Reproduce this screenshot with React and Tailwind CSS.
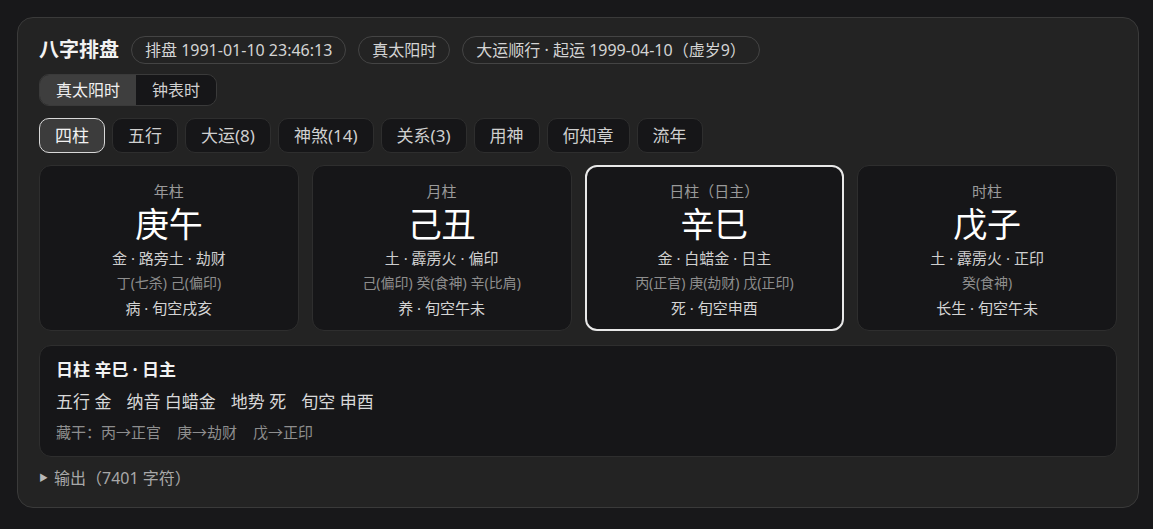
import React from "react";

const font = { fontFamily: "'Noto Sans', 'Noto Sans CJK SC', sans-serif" };

const tabs = ["四柱", "五行", "大运(8)", "神煞(14)", "关系(3)", "用神", "何知章", "流年"];

const pillars = [
  { label: "年柱", gz: "庚午", l1: "金 · 路旁土 · 劫财", l2: "丁(七杀) 己(偏印)", l3: "病 · 旬空戌亥" },
  { label: "月柱", gz: "己丑", l1: "土 · 霹雳火 · 偏印", l2: "己(偏印) 癸(食神) 辛(比肩)", l3: "养 · 旬空午未" },
  { label: "日柱（日主）", gz: "辛巳", l1: "金 · 白蜡金 · 日主", l2: "丙(正官) 庚(劫财) 戊(正印)", l3: "死 · 旬空申酉", active: true },
  { label: "时柱", gz: "戊子", l1: "土 · 霹雳火 · 正印", l2: "癸(食神)", l3: "长生 · 旬空午未" },
];

export default function App() {
  return (
    <div className="min-h-[529px] w-full bg-[#18181a] pt-[17px] pl-[17px]" style={font}>
      <div className="w-[1122px] h-[491px] rounded-[16px] border border-[#3a3a3a] bg-[#232323] px-[21px] pt-[18px] flex flex-col">
        {/* header */}
        <div className="flex items-center gap-3 h-[28px]">
          <div className="text-[20px] font-bold text-[#f2f2f2] leading-none">八字排盘</div>
          <div className="h-[28px] flex items-center px-[13px] rounded-full border border-[#444] text-[16px] text-[#d4d4d4]">排盘 1991-01-10 23:46:13</div>
          <div className="h-[28px] flex items-center px-[13px] rounded-full border border-[#444] text-[16px] text-[#d4d4d4]">真太阳时</div>
          <div className="h-[28px] flex items-center px-[13px] rounded-full border border-[#444] text-[16px] text-[#d4d4d4]">大运顺行 · 起运 1999-04-10（虚岁9）</div>
        </div>

        {/* toggle */}
        <div className="mt-[10px] flex">
          <div className="flex h-[32px] rounded-[10px] border border-[#3a3a3a] overflow-hidden text-[16px]">
            <div className="flex items-center px-[16px] bg-[#3e3e3e] text-[#f0f0f0]">真太阳时</div>
            <div className="flex items-center px-[16px] bg-[#161618] text-[#d0d0d0]">钟表时</div>
          </div>
        </div>

        {/* tabs */}
        <div className="mt-[12px] flex gap-[7px]">
          {tabs.map((t, i) => (
            <div
              key={t}
              className={
                i === 0
                  ? "h-[35px] flex items-center px-[15px] rounded-[10px] border border-[#d8d8d8] bg-[#3c3c3c] text-[17px] text-[#f2f2f2]"
                  : "h-[35px] flex items-center px-[15px] rounded-[10px] border border-[#2e2e2e] bg-[#161618] text-[17px] text-[#cfcfcf]"
              }
            >
              {t}
            </div>
          ))}
        </div>

        {/* pillars */}
        <div className="mt-[12px] grid grid-cols-4 gap-[13px]">
          {pillars.map((p) => (
            <div
              key={p.label}
              className={
                p.active
                  ? "h-[166px] rounded-[12px] border-2 border-[#e8e8e8] bg-[#161618] flex flex-col items-center pt-[13px]"
                  : "h-[166px] rounded-[12px] border border-[#2e2e2e] bg-[#161618] flex flex-col items-center pt-[14px]"
              }
            >
              <div className="text-[15px] leading-[22px] text-[#9a9a9a]">{p.label}</div>
              <div className="text-[34px] leading-[44px] text-[#ffffff]">{p.gz}</div>
              <div className="text-[15px] leading-[24px] text-[#cfcfcf]">{p.l1}</div>
              <div className="text-[14px] leading-[26px] text-[#8e8e8e]">{p.l2}</div>
              <div className="text-[15px] leading-[24px] text-[#d4d4d4]">{p.l3}</div>
            </div>
          ))}
        </div>

        {/* detail */}
        <div className="mt-[14px] h-[112px] rounded-[12px] border border-[#2e2e2e] bg-[#161618] px-[16px] pt-[11px]">
          <div className="text-[17px] leading-[26px] font-bold text-[#f2f2f2]">日柱 辛巳 · 日主</div>
          <div className="mt-[6px] flex gap-[15px] text-[17px] leading-[26px] text-[#d8d8d8]">
            <span>五行 金</span>
            <span>纳音 白蜡金</span>
            <span>地势 死</span>
            <span>旬空 申酉</span>
          </div>
          <div className="mt-[6px] flex text-[15px] leading-[22px] text-[#8e8e8e]">
            <span>藏干：</span>
            <span className="flex gap-[16px]">
              <span>丙→正官</span>
              <span>庚→劫财</span>
              <span>戊→正印</span>
            </span>
          </div>
        </div>

        {/* output */}
        <div className="mt-[10px] flex items-center gap-[6px] text-[16px] leading-[22px] text-[#a8a8a8]">
          <span className="text-[9px] text-[#b8b8b8]">▶</span>
          <span>输出（7401 字符）</span>
        </div>
      </div>
    </div>
  );
}
